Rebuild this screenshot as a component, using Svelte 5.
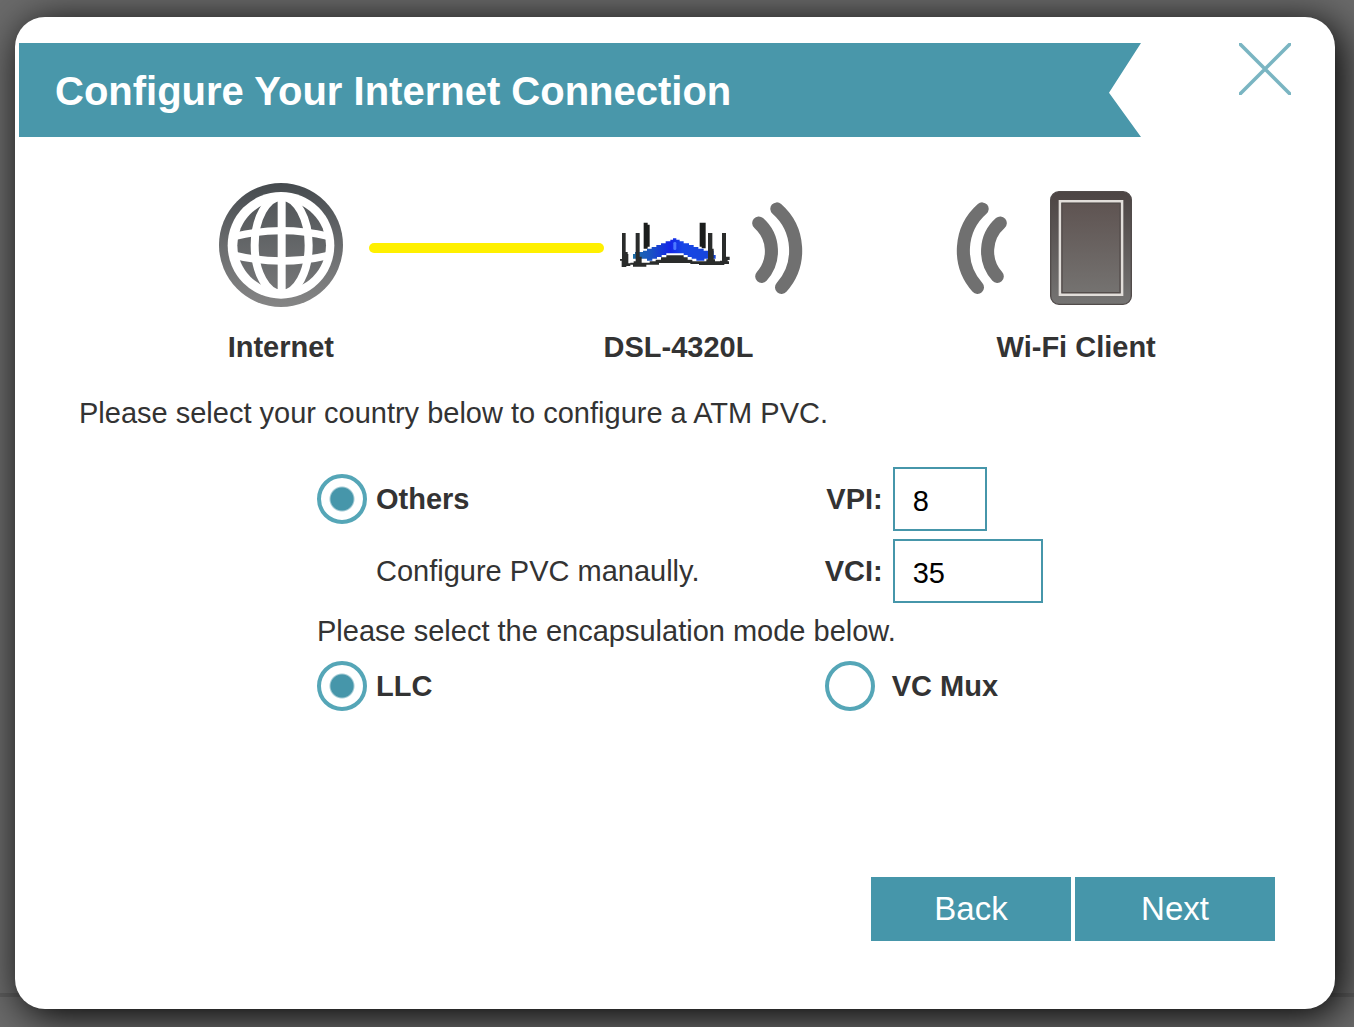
<script lang="ts">
	let pvc = $state('others')
	let encapsulation = $state('llc')
	let vpi = $state('8')
	let vci = $state('35')
</script>

{#snippet waves(flipped: boolean)}
	<svg class="waves" class:flipped viewBox="0 0 152 273" aria-hidden="true">
		<g fill="none" stroke="#707070" stroke-width="39" stroke-linecap="round">
			<path d="M74 20A165 165 0 0 1 88 254" />
			<path d="M20 62A112 112 0 0 1 29 221" />
		</g>
	</svg>
{/snippet}

<div class="page">
	<main class="dialog">
		<header class="header">
			<h1 class="banner">Configure Your Internet Connection</h1>
			<button class="btn-close" type="button" aria-label="Close">
				<svg viewBox="0 0 52 52" aria-hidden="true">
					<path d="M-2 -2L54 54M54 -2L-2 54" fill="none" stroke="#4798aa" stroke-opacity="0.72" stroke-width="3.6" />
				</svg>
			</button>
		</header>

		<div class="content">
			<div class="diagram">
				<svg class="globe" viewBox="57 39 372 390" aria-hidden="true">
					<defs>
						<linearGradient id="globe-rim" x1="0" y1="0" x2="0" y2="1">
							<stop offset="0" stop-color="#454a4e" />
							<stop offset="0.5" stop-color="#6a6c6e" />
							<stop offset="1" stop-color="#858585" />
						</linearGradient>
						<linearGradient id="globe-core" x1="0" y1="0" x2="0" y2="1">
							<stop offset="0" stop-color="#53575a" />
							<stop offset="1" stop-color="#757677" />
						</linearGradient>
					</defs>
					<circle cx="243" cy="225" r="186" fill="url(#globe-rim)" />
					<circle cx="243" cy="226" r="160" fill="#fff" />
					<circle cx="245" cy="226" r="133" fill="url(#globe-core)" />
					<g fill="none" stroke="#fff" stroke-width="24">
						<path d="M245 80V370" />
						<ellipse cx="245" cy="226" rx="81" ry="146" />
						<path d="M104 199Q245 165 386 199" stroke-width="22" />
						<path d="M104 256Q245 290 386 256" stroke-width="22" />
					</g>
				</svg>
				<div class="cable"></div>
				<svg class="router" viewBox="15 15 330 162" aria-hidden="true">
					<defs>
						<linearGradient id="router-body" x1="0" x2="1" y1="0" y2="0">
							<stop offset="0" stop-color="#1c6fa8" />
							<stop offset="0.2" stop-color="#1a55c0" />
							<stop offset="0.45" stop-color="#1425e8" />
							<stop offset="0.6" stop-color="#1746e6" />
							<stop offset="1" stop-color="#1746d8" />
						</linearGradient>
					</defs>
					<path d="M86 20H98V26H104V92H98V98H86ZM254 20H272V97H260V92H254Z" fill="#1b1d1c" />
					<path d="M15 129H38V142H46V150H34V153H20V134H15ZM46 140H104V136H122V131H138V124H154V118H206V124H218V131H232V136H342V144H328V147H252V144H226V141H132V146H94V152H54V146H46Z" fill="#2a2c2b" />
					<path d="M54 114H60V108H84V104H96V98H110V93H124V87H138V82H152V76H166V71H174V67H184V71H194V76H206V82H222V87H236V93H250V98H266V104H296V117H302V128H268V134H244V128H230V123H218V117H206V112H154V117H140V123H126V128H112V134H96V128H54Z" fill="url(#router-body)" />
					<path d="M21 51H32V108H38V114H40V148H21ZM62 51H74V122H80V148H56V136H62ZM279 51H292V98H296V130H300V144H274V130H279ZM321 51H333V122H344V132H338V144H315V134H321Z" fill="#2a2c2b" />
					<rect x="175" y="78" width="9" height="24" rx="4" fill="#4c78ff" />
				</svg>
				{@render waves(false)}
				<div class="air"></div>
				{@render waves(true)}
				<svg class="tablet" viewBox="331 36 246 342" aria-hidden="true">
					<defs>
						<linearGradient id="tablet-case" x1="0" y1="0" x2="0" y2="1">
							<stop offset="0" stop-color="#4c4443" />
							<stop offset="1" stop-color="#757473" />
						</linearGradient>
						<linearGradient id="tablet-screen" x1="0" y1="0" x2="0" y2="1">
							<stop offset="0" stop-color="#5e5351" />
							<stop offset="1" stop-color="#757371" />
						</linearGradient>
					</defs>
					<rect x="333" y="38" width="242" height="338" rx="25" fill="url(#tablet-case)" stroke="#514b4a" stroke-width="4" />
					<rect x="361" y="67" width="186" height="280" fill="url(#tablet-screen)" stroke="#e2deda" stroke-width="8" />
					<rect x="367" y="73" width="174" height="268" fill="none" stroke="#544d4b" stroke-width="4" />
				</svg>
			</div>

			<div class="captions">
				<span>Internet</span>
				<span>DSL-4320L</span>
				<span>Wi-Fi Client</span>
			</div>

			<p class="intro">Please select your country below to configure a ATM PVC.</p>

			<form class="form">
				<label class="option">
					<input type="radio" class="radio" name="pvc" value="others" bind:group={pvc} />
					Others
				</label>
				<div class="field">
					<label for="vpi">VPI:</label>
					<input id="vpi" type="text" class="input input-short" bind:value={vpi} />
				</div>

				<span class="hint">Configure PVC manaully.</span>
				<div class="field">
					<label for="vci">VCI:</label>
					<input id="vci" type="text" class="input" bind:value={vci} />
				</div>

				<p class="mode-text">Please select the encapsulation mode below.</p>

				<label class="option">
					<input type="radio" class="radio" name="encapsulation" value="llc" bind:group={encapsulation} />
					LLC
				</label>
				<label class="option option-wide">
					<input type="radio" class="radio" name="encapsulation" value="vcmux" bind:group={encapsulation} />
					VC Mux
				</label>
			</form>

			<footer class="actions">
				<button class="btn" type="button">Back</button>
				<button class="btn" type="button">Next</button>
			</footer>
		</div>
	</main>
</div>

<style>
	:global(body) {
		margin: 0;
	}

	.page {
		--accent: #4696aa;
		box-sizing: border-box;
		display: flex;
		min-height: 100vh;
		padding: 17px 19px 18px 15px;
		overflow: hidden;
		background: linear-gradient(#5c5c5c, #5c5c5c) 0 calc(100% - 30px) / 100% 4px no-repeat #6a6a6a;
		color: #333;
		font-family: 'Liberation Sans', Arial, sans-serif;
		font-size: 29px;
		line-height: 36px;
	}

	.dialog {
		display: flex;
		flex: 1;
		flex-direction: column;
		border-radius: 30px;
		background: #fff;
		box-shadow: 6px 6px 40px #000;
	}

	.header {
		display: flex;
		align-items: flex-start;
		justify-content: space-between;
		gap: 98px;
		padding: 26px 44px 0 4px;
	}

	.banner {
		box-sizing: border-box;
		flex: 1;
		height: 94px;
		margin: 0;
		padding: 0 36px;
		background: #4997aa;
		clip-path: polygon(0 0, 100% 0, calc(100% - 32px) 53%, 100% 100%, 0 100%);
		color: #fff;
		font-size: 40px;
		line-height: 96px;
	}

	.btn-close {
		width: 52px;
		height: 52px;
		padding: 0;
		border: none;
		background: none;
		cursor: pointer;
	}

	.btn-close svg {
		display: block;
	}

	.content {
		display: flex;
		flex: 1;
		flex-direction: column;
		padding: 46px 60px 68px 64px;
	}

	.diagram {
		display: flex;
		align-items: center;
		padding: 0 143px 0 140px;
	}

	.diagram svg {
		flex: none;
	}

	.globe {
		width: 124px;
		height: 130px;
	}

	.cable {
		flex: 20;
		height: 10px;
		margin: 0 16px 0 26px;
		border-radius: 5px;
		background: #fff000;
	}

	.router {
		width: 110px;
		height: 54px;
	}

	.waves {
		width: 51px;
		height: 92px;
		margin-left: 22px;
	}

	.flipped {
		margin: 0 43px 0 0;
		transform: scaleX(-1);
	}

	.air {
		flex: 13;
	}

	.tablet {
		width: 82px;
		height: 114px;
	}

	.captions {
		display: grid;
		grid-template-columns: repeat(3, 1fr);
		margin: 16px 0 0 3px;
		font-weight: bold;
		text-align: center;
	}

	.intro {
		margin: 30px 0 36px;
	}

	.form {
		display: grid;
		grid-template-columns: 53% 1fr;
		row-gap: 8px;
		align-items: center;
		margin-left: 238px;
	}

	.option {
		display: flex;
		align-items: center;
		gap: 9px;
		font-weight: bold;
	}

	.option-wide {
		gap: 17px;
	}

	.radio {
		appearance: none;
		flex: none;
		width: 50px;
		height: 50px;
		margin: 0;
		border: 4px solid #55a6b7;
		border-radius: 50%;
		background: #fff;
	}

	.radio:checked {
		background: radial-gradient(circle, var(--accent) 11px, #fff 13px);
	}

	.field {
		display: flex;
		align-items: center;
		gap: 10px;
	}

	.field label {
		width: 58px;
		font-weight: bold;
		text-align: right;
	}

	.input {
		box-sizing: border-box;
		width: 150px;
		height: 64px;
		padding: 4px 18px 0;
		border: 2px solid var(--accent);
		border-radius: 0;
		background: #fff;
		color: #000;
		font: inherit;
	}

	.input-short {
		width: 94px;
	}

	.hint {
		padding-left: 59px;
	}

	.mode-text {
		grid-column: 1 / -1;
		margin: 2px 0 4px;
	}

	.actions {
		display: flex;
		justify-content: flex-end;
		gap: 4px;
		margin-top: auto;
	}

	.btn {
		width: 200px;
		height: 64px;
		padding: 0;
		border: none;
		background: var(--accent);
		color: #fff;
		font-family: inherit;
		font-size: 33px;
		cursor: pointer;
	}
</style>
